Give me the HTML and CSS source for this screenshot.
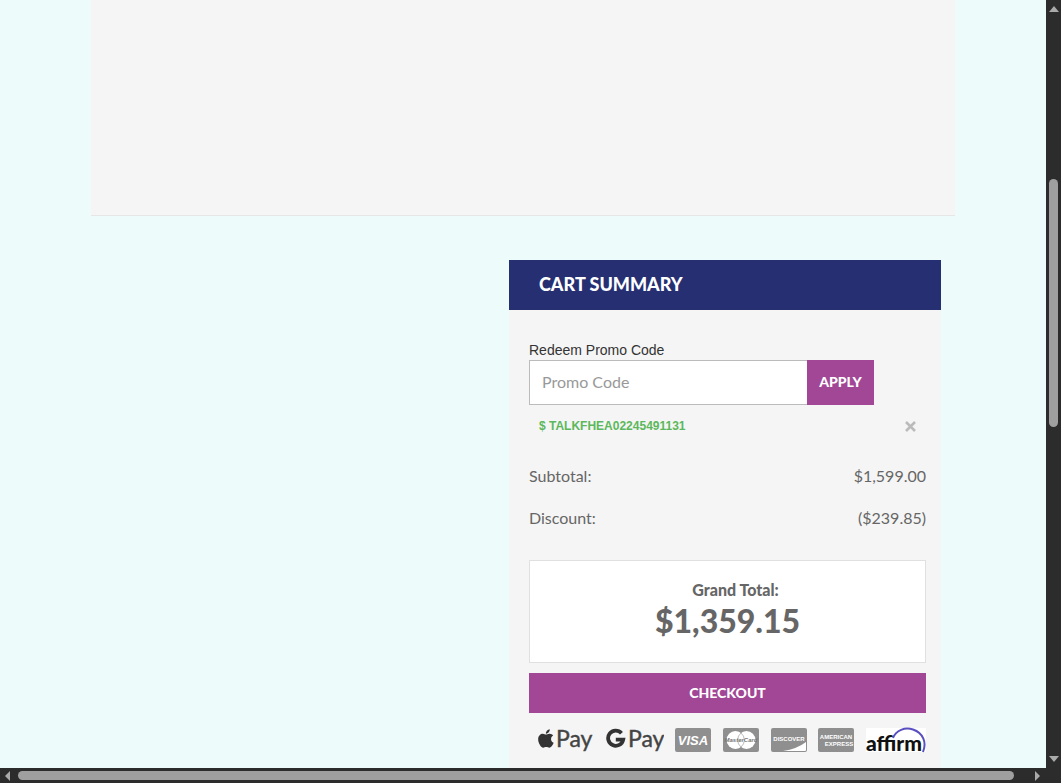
FILE: index.html
```
<!DOCTYPE html>
<html lang="en">
  <head>
    <meta charset="utf-8">
    <title>Shopping Cart</title>
    <link rel="stylesheet" href="styles.css">
  </head>
  <body>
    <div class="window">
      <main class="page">
        <div class="container">
          <section class="cart-items"></section>

          <section class="summary">
            <h2 class="summary-title">CART SUMMARY</h2>
            <div class="summary-body">
              <form class="promo" action="">
                <label for="promo">Redeem Promo Code</label>
                <div class="promo-row">
                  <input id="promo" type="text" placeholder="Promo Code" autocomplete="off">
                  <button type="button">APPLY</button>
                </div>
              </form>

              <div class="coupon">
                <span>$ TALKFHEA02245491131</span>
                <button type="button" class="remove" aria-label="Remove promo code">
                  <svg width="11" height="11" viewBox="0 0 11 11"><path d="M1 1l9 9M10 1l-9 9" stroke="#bbb" stroke-width="2.6"/></svg>
                </button>
              </div>

              <dl class="totals">
                <div class="line"><dt>Subtotal:</dt><dd>$1,599.00</dd></div>
                <div class="line"><dt>Discount:</dt><dd>($239.85)</dd></div>
              </dl>

              <div class="grand">
                <div class="grand-label">Grand Total:</div>
                <div class="grand-value">$1,359.15</div>
              </div>

              <button type="button" class="checkout">CHECKOUT</button>

              <div class="payments">
                <svg class="pay" width="56" height="32" viewBox="0 0 56 32">
                  <path fill="#333" transform="translate(0 4) scale(.041)" d="M318.7 268.7c-.2-36.7 16.4-64.4 50-84.8-18.8-26.9-47.2-41.7-84.7-44.6-35.5-2.8-74.3 20.7-88.5 20.7-15 0-49.4-19.7-76.4-19.7C63.3 141.2 4 184.8 4 273.5q0 39.3 14.4 81.2c12.8 36.7 59 126.7 107.2 125.2 25.2-.6 43-17.9 75.8-17.9 31.8 0 48.3 17.9 76.4 17.9 48.6-.7 90.4-82.5 102.6-119.3-65.2-30.7-61.7-90-61.7-91.9zm-56.6-164.2c27.3-32.4 24.8-61.9 24-72.5-24.1 1.4-52 16.4-67.9 34.9-17.5 19.8-27.8 44.3-25.6 71.9 26.1 2 49.9-11.4 69.5-34.3z"/>
                  <text x="18" y="23">Pay</text>
                </svg>
                <svg class="pay" width="58" height="32" viewBox="0 0 58 32">
                  <path fill="none" stroke="#333" stroke-width="3.8" d="M15.5 9.2A7.6 7.6 0 1 0 17.2 15.6H9.8"/>
                  <text x="22" y="23">Pay</text>
                </svg>
                <svg class="card" width="36" height="24" viewBox="0 0 36 24">
                  <rect width="36" height="24" rx="2"/>
                  <text class="visa" x="18" y="17">VISA</text>
                </svg>
                <svg class="card" width="36" height="24" viewBox="0 0 36 24">
                  <rect width="36" height="24" rx="2"/>
                  <circle cx="12.5" cy="12" r="9" fill="#fff"/>
                  <circle cx="23.5" cy="12" r="9" fill="#fff"/>
                  <path d="M18 5a9 9 0 0 0 0 14a9 9 0 0 0 0-14" fill="none" stroke="#aaa" stroke-width=".8"/>
                  <text class="master" x="18" y="14">MasterCard</text>
                </svg>
                <svg class="card" width="36" height="24" viewBox="0 0 36 24">
                  <rect width="36" height="24" rx="2"/>
                  <path d="M12 23Q26 21 35 14V22Q35 23 34 23Z" fill="#fff"/>
                  <text class="discover" x="18" y="13">DISCOVER</text>
                </svg>
                <svg class="card" width="36" height="24" viewBox="0 0 36 24">
                  <rect width="36" height="24" rx="2"/>
                  <text class="amex" x="18" y="11">AMERICAN</text>
                  <text class="amex" x="21" y="18">EXPRESS</text>
                </svg>
                <svg class="affirm" width="60" height="32" viewBox="0 0 60 32">
                  <rect y="4" width="60" height="24" fill="#fff"/>
                  <path d="M27 14C30 6 39 3 47 5.5C57 9 61 18 57 28" fill="none" stroke="#5a4fc0" stroke-width="2"/>
                  <text x="0" y="27">affirm</text>
                </svg>
              </div>
            </div>
          </section>
        </div>
      </main>

      <div class="bar bar-y">
        <svg width="10" height="8" viewBox="0 0 10 8"><path d="M0 7L5 1L10 7Z"/></svg>
        <div class="track"><div class="thumb"></div></div>
        <svg width="10" height="8" viewBox="0 0 10 8"><path d="M0 1L5 7L10 1Z"/></svg>
      </div>
      <div class="bar bar-x">
        <svg width="8" height="10" viewBox="0 0 8 10"><path d="M6 0L1 5L6 10Z"/></svg>
        <div class="track"><div class="thumb"></div></div>
        <svg width="8" height="10" viewBox="0 0 8 10"><path d="M2 0L7 5L2 10Z"/></svg>
      </div>
      <div class="corner"></div>
    </div>
  </body>
</html>
```
FILE: styles.css
```
* { box-sizing: border-box; }
body { margin: 0; font-family: Lato, "Liberation Sans", sans-serif; font-size: 16px; color: #666; background: #eefbfb; }
button { border: none; padding: 0; font-family: inherit; font-weight: 900; color: #fff; background: #a24696; }

.window { display: grid; grid-template-columns: 1fr 15px; grid-template-rows: 1fr 15px; height: 100vh; }
.page { overflow: hidden; }
.container { max-width: 864px; margin: 0 auto; }

.cart-items { height: 216px; background: #f5f5f5; border-bottom: 1px solid #e6e6e6; }

.summary { width: 50%; margin: 44px 14px 0 auto; background: #f5f5f5; }
.summary-title { margin: 0; padding: 0 30px 2px; line-height: 48px; font-size: 18px; font-weight: 900; color: #fff; background: #252f72; }
.summary-body { padding: 30px 15px 40px 20px; }

.promo label { display: block; font-family: "Liberation Sans", Arial, sans-serif; font-size: 14px; line-height: 20px; color: #333; }
.promo-row { display: flex; height: 45px; margin-right: 52px; }
.promo-row input { flex: 1; min-width: 0; padding: 0 12px 2px; border: 1px solid #bbb; border-right: none; font-family: inherit; font-size: 16px; color: #555; background: #fff; }
.promo-row input::placeholder { color: #999; }
.promo-row button { width: 67px; padding-bottom: 2px; font-size: 14px; }

.coupon { display: flex; justify-content: space-between; align-items: center; height: 42px; padding: 0 10px; font-family: "Liberation Sans", Arial, sans-serif; font-size: 12px; font-weight: bold; color: #5cb85c; }
.remove { display: flex; background: none; }

.totals { margin: 8px 0 21px; }
.line { display: flex; justify-content: space-between; line-height: 42px; }
.line dd { margin: 0; }

.grand { height: 103px; padding-top: 17px; border: 1px solid #e0e0e0; background: #fff; text-align: center; font-weight: 900; }
.grand-label { padding-left: 16px; line-height: 24px; font-weight: 900; }
.grand-value { font-size: 32px; line-height: 38px; }

.checkout { display: block; width: 100%; height: 40px; margin-top: 10px; padding-bottom: 2px; font-size: 14px; }

.payments { display: flex; justify-content: space-between; align-items: center; height: 32px; margin-top: 11px; padding-left: 9px; }
.pay text { font-size: 23px; fill: #444; stroke: #444; stroke-width: .4px; }
.card rect { fill: #8f8f8f; }
.card text { fill: #fff; text-anchor: middle; font-family: "Liberation Sans", Arial, sans-serif; font-weight: bold; }
.card .visa { font-size: 13px; font-style: italic; }
.card .master { font-size: 6px; font-style: italic; fill: #777; }
.card .discover { font-size: 6px; }
.card .amex { font-size: 6px; }
.affirm text { font-size: 21px; font-weight: 900; fill: #111; }

/* scrollbars */
.bar { display: flex; align-items: center; background: #2c2c2c; }
.bar svg { fill: #aaa; }
.track { flex: 1; display: flex; }
.thumb { border-radius: 5px; background: #9f9f9f; }
.bar-y { grid-column: 2; grid-row: 1; flex-direction: column; padding: 5px 0; }
.bar-y .track { flex-direction: column; padding-top: 166px; }
.bar-y .thumb { width: 9px; height: 248px; }
.bar-x { grid-column: 1; grid-row: 2; padding: 0 5px 0 4px; }
.bar-x .track { padding: 0 19px 0 6px; }
.bar-x .thumb { flex: 1; height: 9px; }
.corner { background: #2c2c2c; }
```
